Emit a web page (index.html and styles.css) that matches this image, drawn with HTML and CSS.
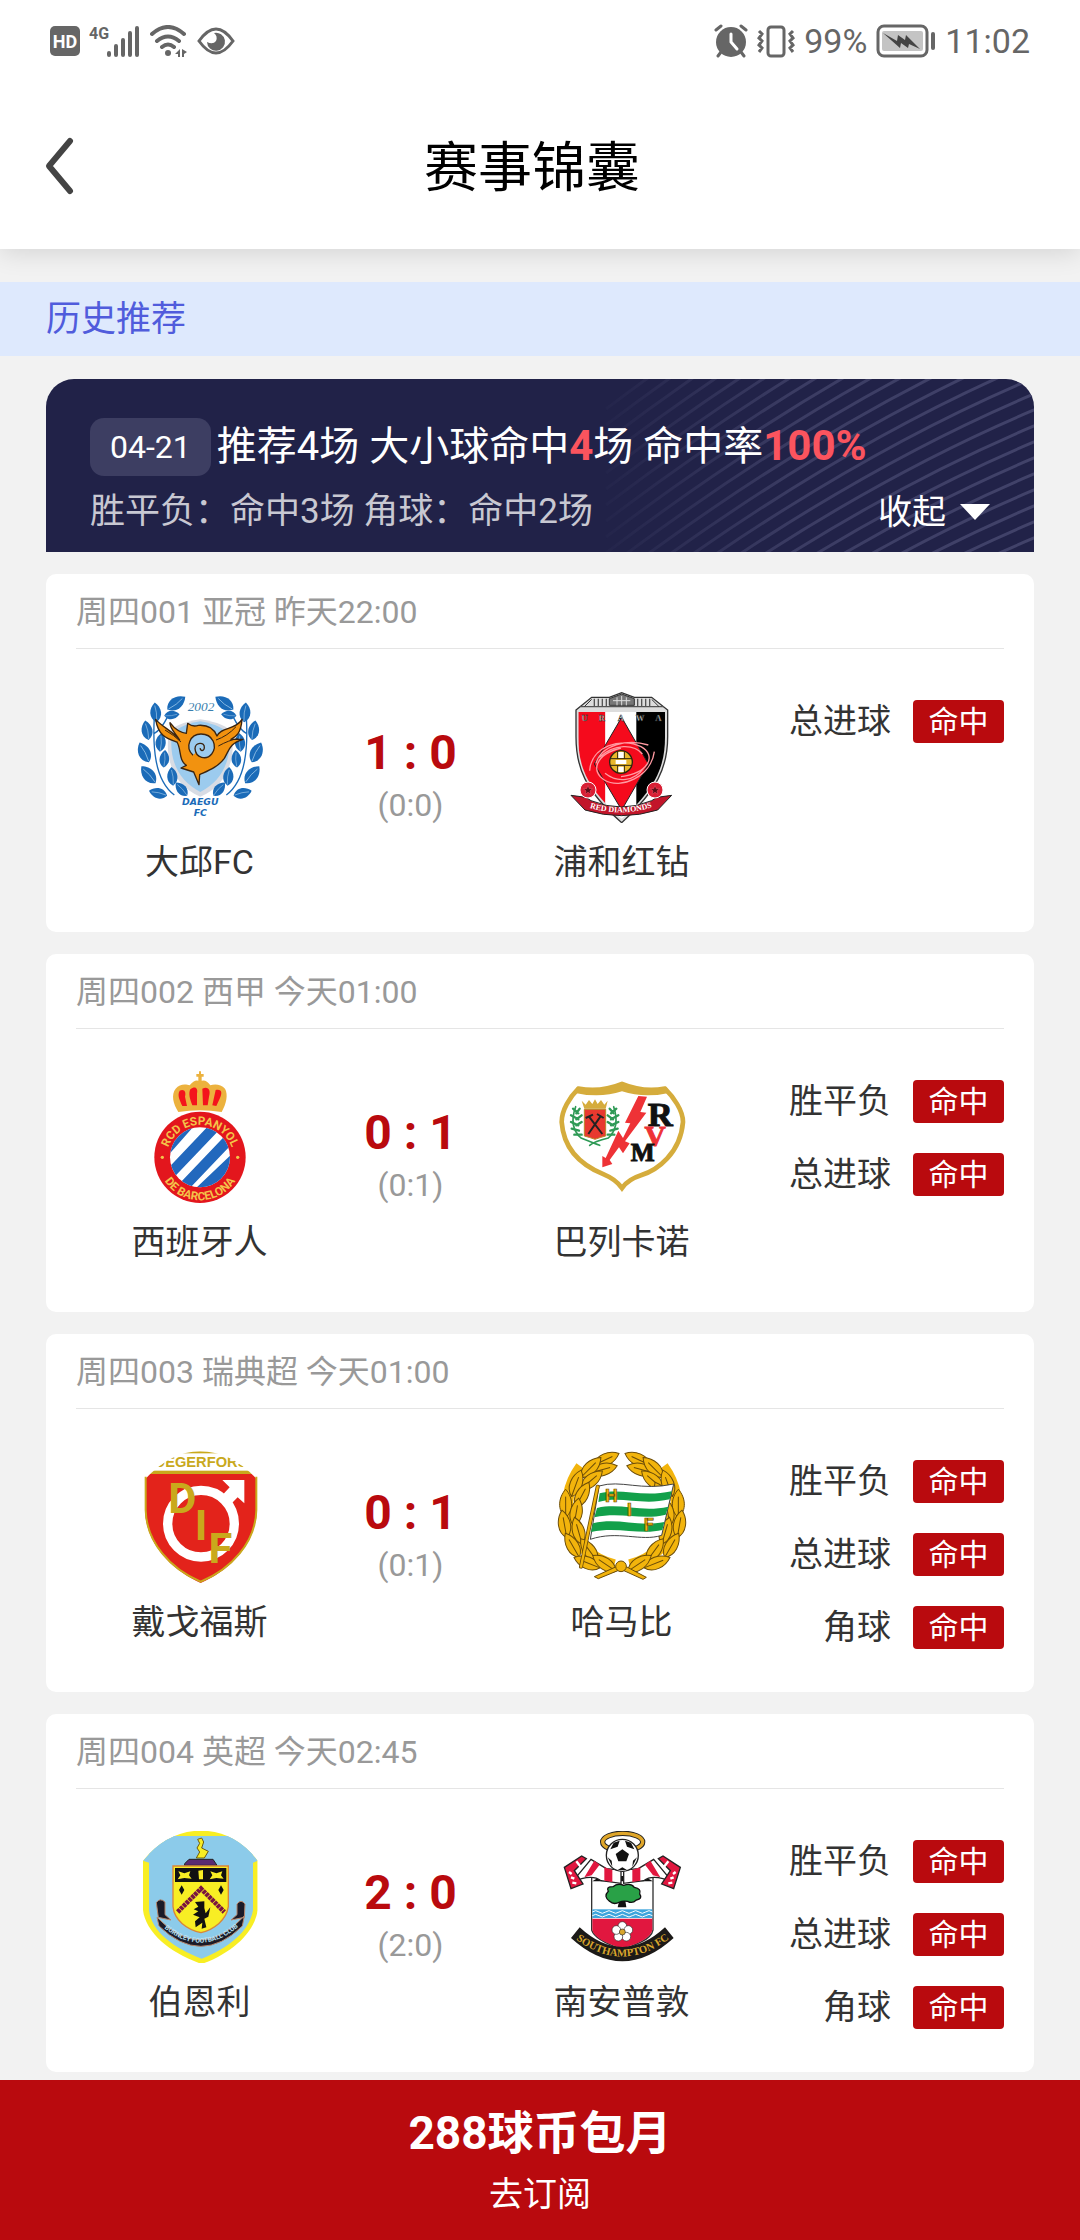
FILE: index.html
```html
<!DOCTYPE html>
<html lang="zh-CN">
<head>
    <meta charset="utf-8">
    <meta name="viewport" content="width=device-width, initial-scale=1">
    <title>赛事锦囊</title>
    <link rel="stylesheet" href="styles.css">
</head>
<body>
    <div class="top">
        <div class="status-bar">
            <div class="status-left">
                <svg width="30" height="32" viewBox="0 0 30 32">
                    <rect y="1" width="30" height="30" rx="5" fill="#666"/>
                    <text x="15" y="23" text-anchor="middle" font-size="18" font-weight="bold" fill="#fff">HD</text>
                </svg>
                <svg width="52" height="32" viewBox="0 0 52 32">
                    <text x="0" y="14" font-size="16" font-weight="bold" fill="#666">4G</text>
                    <path d="M20 28v2M27 21v9M34 15v15M41 8v22M48 3v27" stroke="#666" stroke-width="4" stroke-linecap="round"/>
                </svg>
                <svg width="38" height="32" viewBox="0 0 38 32" fill="none" stroke="#666" stroke-width="4" stroke-linecap="round">
                    <path d="M2 9Q18-5 34 9M7 16Q18 7 29 16M12 22Q18 17 24 22"/>
                    <circle cx="18" cy="28" r="3" fill="#666" stroke="none"/>
                    <path d="M30 24v8h-2v-3h-3zM32 24v8h2v-3l3-2z" fill="#666" stroke="none"/>
                </svg>
                <svg width="38" height="32" viewBox="0 0 38 32">
                    <path d="M2 16Q19-8 36 16Q19 40 2 16Z" fill="none" stroke="#666" stroke-width="3"/>
                    <path d="M17 8A9 9 0 1 1 10 17Q16 20 19 16Q21 11 17 8Z" fill="#666"/>
                </svg>
            </div>
            <div class="status-right">
                <svg width="34" height="34" viewBox="0 0 34 34">
                    <path d="M2 6l5-4M32 6l-5-4M7 28l-3 4M27 28l3 4" stroke="#666" stroke-width="3" stroke-linecap="round"/>
                    <circle cx="17" cy="18" r="15" fill="#666"/>
                    <path d="M17 10v8l6 7" fill="none" stroke="#fff" stroke-width="3" stroke-linecap="round"/>
                </svg>
                <svg width="38" height="34" viewBox="0 0 38 34" fill="none" stroke="#666" stroke-width="3">
                    <rect x="11" y="3" width="16" height="29" rx="3"/>
                    <path d="M2 7l3 3-3 4 3 3-3 4 3 3-3 4M36 7l-3 3 3 4-3 3 3 4-3 3 3 4"/>
                </svg>
                <span>99%</span>
                <svg width="60" height="34" viewBox="0 0 60 34">
                    <rect x="2" y="2" width="49" height="30" rx="6" fill="#fff" stroke="#666" stroke-width="3"/>
                    <rect x="6" y="7" width="41" height="20" rx="2" fill="#c4c4c4"/>
                    <path d="M7 9l14 8 1-6 7 5 1-5 14 14-11-5-1 4-7-5-1 5z" fill="#444"/>
                    <path d="M57 10v14" stroke="#666" stroke-width="4" stroke-linecap="round"/>
                </svg>
                <span>11:02</span>
            </div>
        </div>
        <header class="nav">
            <button class="back" type="button" aria-label="返回">
                <svg width="32" height="60" viewBox="0 0 32 60">
                    <path d="M26 5L5 30L26 55" fill="none" stroke="#444" stroke-width="6" stroke-linecap="round" stroke-linejoin="round"/>
                </svg>
            </button>
            <h1>赛事锦囊</h1>
        </header>
    </div>

    <main>
        <h2 class="section-title">历史推荐</h2>

        <section class="summary">
            <svg class="summary-lines" viewBox="0 0 988 173" preserveAspectRatio="xMaxYMid slice">
                <defs>
                    <linearGradient id="fade" x1="0" x2="1">
                        <stop offset="0.54" stop-color="#fff" stop-opacity="0"/>
                        <stop offset="0.76" stop-color="#fff" stop-opacity="0.8"/>
                        <stop offset="1" stop-color="#fff"/>
                    </linearGradient>
                    <mask id="fadeMask"><rect width="988" height="173" fill="url(#fade)"/></mask>
                    <path id="line" d="M1000 0Q790 86 560 260"/>
                    <g id="lines">
                        <use href="#line"/>
                        <use href="#line" y="16"/>
                        <use href="#line" y="32"/>
                        <use href="#line" y="48"/>
                        <use href="#line" y="64"/>
                    </g>
                </defs>
                <g mask="url(#fadeMask)" fill="none" stroke="#42436a" stroke-width="3">
                    <use href="#lines" y="-230"/>
                    <use href="#lines" y="-150"/>
                    <use href="#lines" y="-70"/>
                    <use href="#lines" y="10"/>
                    <use href="#lines" y="90"/>
                </g>
            </svg>
            <div class="summary-main">
                <span class="date">04-21</span>
                <span>推荐4场 大小球命中<b>4</b>场 命中率<b>100%</b></span>
            </div>
            <div class="summary-sub">
                <span>胜平负：命中3场 角球：命中2场</span>
                <button class="toggle" type="button">收起
                    <svg width="30" height="18" viewBox="0 0 30 18"><path d="M0 1H30L15 17Z" fill="#fff"/></svg>
                </button>
            </div>
        </section>

        <article class="match">
            <h3>周四001 亚冠 昨天22:00</h3>
            <div class="match-body">
                <div class="team">
                    <svg class="crest" viewBox="39 33 396 396">
                        <defs>
                            <g id="leaf">
                                <path d="M0 32C-26 16-22-16 0-34C22-16 26 16 0 32Z" fill="#1b6bb8"/>
                                <path d="M1 28Q5 0-1-24" fill="none" stroke="#a9d0ee" stroke-width="2"/>
                            </g>
                            <g id="branch">
                                <path d="M160 345C100 300 95 200 100 110M100 160Q120 150 140 110" fill="none" stroke="#1b6bb8" stroke-width="4"/>
                                <use href="#leaf" transform="translate(165 70) rotate(55)"/>
                                <use href="#leaf" transform="translate(152 105) rotate(85) scale(.7)"/>
                                <use href="#leaf" transform="translate(104 98) rotate(-5) scale(.9)"/>
                                <use href="#leaf" transform="translate(78 152) rotate(-10) scale(.9)"/>
                                <use href="#leaf" transform="translate(119 188) rotate(5) scale(.85)"/>
                                <use href="#leaf" transform="translate(70 218) rotate(-25)"/>
                                <use href="#leaf" transform="translate(130 237) rotate(5) scale(.8)"/>
                                <use href="#leaf" transform="translate(83 285) rotate(-40)"/>
                                <use href="#leaf" transform="translate(154 290) rotate(-5) scale(.85)"/>
                                <use href="#leaf" transform="translate(112 340) rotate(-75) scale(.85)"/>
                                <use href="#leaf" transform="translate(182 328) rotate(-40) scale(.8)"/>
                            </g>
                        </defs>
                        <path d="M143 160Q160 130 238 118Q316 130 333 160C345 250 310 320 238 350C166 320 130 250 143 160Z" fill="#d8dce4"/>
                        <path d="M152 166Q170 136 238 124Q306 136 324 166C332 246 300 304 238 336C176 304 144 246 152 166Z" fill="#9ccbee"/>
                        <use href="#branch"/>
                        <use href="#branch" transform="translate(476 0) scale(-1 1)"/>
                        <path d="M104 118C125 142 150 150 176 180C160 155 146 145 147 128C162 150 185 160 196 160L200 130Q215 142 232 136C262 134 280 148 288 168C300 140 345 150 363 118C360 160 345 170 330 178H366C325 190 325 210 310 235C290 262 262 272 236 284L234 314L218 276L180 264L196 256C172 240 182 210 168 186C140 176 112 170 104 118Z" fill="#f2920f" stroke="#3a2410" stroke-width="4" stroke-linejoin="round"/>
                        <path d="M216 226C190 200 208 162 240 162C276 162 290 198 272 222C256 242 224 234 222 206C222 186 252 184 250 204C248 216 236 212 238 204" fill="#9ccbee" stroke="#3a2410" stroke-width="4"/>
                        <path d="M285 180Q320 168 345 140M292 198Q325 180 350 176M132 150Q160 166 180 186" fill="none" stroke="#3a2410" stroke-width="3"/>
                        <text x="240" y="92" text-anchor="middle" class="serif" font-size="40" font-style="italic" fill="#3a7fae">2002</text>
                        <g text-anchor="middle" font-size="28" font-style="italic" font-weight="bold" class="wide" fill="#1b6bb8">
                            <text x="238" y="375">DAEGU</text>
                            <text x="238" y="408">FC</text>
                        </g>
                    </svg>
                    <span>大邱FC</span>
                </div>
                <div class="score">
                    <strong>1 : 0</strong>
                    <span>(0:0)</span>
                </div>
                <div class="team">
                    <svg class="crest" viewBox="45 33 396 396">
                        <defs>
                            <clipPath id="urawaClip"><path d="M112 96H372V170C372 250 352 320 242 416C130 320 112 250 112 170Z"/></clipPath>
                            <path id="urawaText" d="M146 384Q242 412 340 380"/>
                            <g id="rose">
                                <circle r="24" fill="#d81e34" stroke="#fff" stroke-width="3"/>
                                <path d="M0-14L4-4L14-4L6 3L9 13L0 7L-9 13L-6 3L-14-4L-4-4Z" fill="#5c0d18" stroke="#e8485a" stroke-width="2"/>
                            </g>
                        </defs>
                        <path d="M105 90L152 52H205L242 38L280 52H332L380 90V170C380 260 350 330 242 428C130 330 105 260 105 170Z" fill="#ddd" stroke="#333" stroke-width="4"/>
                        <path d="M118 80H368M160 56V80M172 56V80M184 56V80M196 56V80M290 56V80M302 56V80M314 56V80M326 56V80" stroke="#555" stroke-width="4"/>
                        <path d="M205 76V56L242 42L280 56V76ZM130 80L152 58M354 80L332 58" fill="#777" stroke="#333" stroke-width="3"/>
                        <path d="M216 62H268M228 52V76M242 48V76M256 52V76" stroke="#ddd" stroke-width="3"/>
                        <g clip-path="url(#urawaClip)">
                            <rect x="105" y="90" width="88" height="330" fill="#f50a1c"/>
                            <rect x="193" y="90" width="93" height="330" fill="#fff"/>
                            <rect x="286" y="90" width="95" height="330" fill="#000"/>
                        </g>
                        <path d="M242 112L322 252L242 390L160 252Z" fill="#f50a1c" stroke="#222" stroke-width="3"/>
                        <g fill="none" stroke="#ff9aa2" stroke-width="4">
                            <path d="M146 272C150 200 240 170 300 200C350 228 320 280 240 290M340 215C330 290 240 330 190 300C150 276 160 224 240 204M165 250C180 195 260 175 322 195M175 232C220 190 280 192 304 222M310 262C280 305 230 310 192 280"/>
                        </g>
                        <circle cx="240" cy="246" r="34" fill="#e9b72a" stroke="#2d2410" stroke-width="4"/>
                        <path d="M208 236H272M208 256H272M230 214V236M250 214V236M230 256V278M250 256V278" stroke="#2d2410" stroke-width="3"/>
                        <path d="M232 216H248V234H232ZM224 240H256V252H224ZM232 260H248V276H232Z" fill="#fff"/>
                        <path d="M90 346L135 352L150 362Q242 400 332 362L348 352L392 346L350 390Q242 424 132 390Z" fill="#c2152a" stroke="#222" stroke-width="3"/>
                        <use href="#rose" x="141" y="330"/>
                        <use href="#rose" x="342" y="330"/>
                        <g class="serif" font-size="26" font-weight="bold" fill="#ccc" stroke="#222" stroke-width="1" text-anchor="middle">
                            <text x="131" y="124">U</text><text x="183" y="124">R</text><text x="240" y="124">A</text><text x="297" y="124">W</text><text x="352" y="124">A</text>
                        </g>
                        <text class="serif" font-size="24" font-weight="bold" fill="#fff"><textPath href="#urawaText">RED DIAMONDS</textPath></text>
                    </svg>
                    <span>浦和红钻</span>
                </div>
                <ul class="hits">
                    <li>总进球 <em>命中</em></li>
                </ul>
            </div>
        </article>

        <article class="match">
            <h3>周四002 西甲 今天01:00</h3>
            <div class="match-body">
                <div class="team">
                    <svg class="crest" viewBox="39 33 396 396">
                        <defs>
                            <clipPath id="espClip"><circle cx="237" cy="292" r="90"/></clipPath>
                            <path id="espTop" d="M137 310A101 101 0 1 1 337 310"/>
                            <path id="espBottom" d="M112 296A125 125 0 0 0 362 296"/>
                        </defs>
                        <path d="M172 156C156 130 150 104 164 86C176 70 196 72 206 76Q220 58 232 62V50H226V42H234V34H240V42H248V50H242V62Q256 58 268 76C280 72 300 72 312 86C322 104 316 130 302 156Q237 146 172 156Z" fill="#ecb23e"/>
                        <path d="M176 92C190 86 196 96 192 110L198 138L184 138C176 120 168 106 176 92ZM208 88C222 76 232 84 228 100V136L214 136C206 116 202 100 208 88ZM244 86C262 78 270 90 264 110L260 136H246ZM284 90C304 86 304 100 296 116L286 138L274 136Z" fill="#f4141c"/>
                        <circle cx="237" cy="292" r="137" fill="#e3161d"/>
                        <circle cx="237" cy="292" r="90" fill="#fff"/>
                        <g clip-path="url(#espClip)" stroke="#2268bd" stroke-width="32">
                            <path d="M80 332L240 150M120 370L320 160M160 410L360 200M200 430L400 240"/>
                        </g>
                        <g font-size="35" font-weight="bold" fill="#f3c44a">
                            <text><textPath href="#espTop" startOffset="50%" text-anchor="middle">RCD ESPANYOL</textPath></text>
                            <text><textPath href="#espBottom" startOffset="50%" text-anchor="middle">DE BARCELONA</textPath></text>
                        </g>
                        <circle cx="124" cy="292" r="5" fill="#f3c44a"/>
                        <circle cx="350" cy="292" r="5" fill="#f3c44a"/>
                    </svg>
                    <span>西班牙人</span>
                </div>
                <div class="score">
                    <strong>0 : 1</strong>
                    <span>(0:1)</span>
                </div>
                <div class="team">
                    <svg class="crest" viewBox="45 33 396 396">
                        <path d="M112 86Q180 98 243 72Q306 98 372 86C396 110 426 150 426 186C418 280 350 330 300 346Q262 358 243 384Q224 358 190 344C120 316 68 270 62 186C62 150 86 112 112 86Z" fill="#fff" stroke="#d5ac3c" stroke-width="14"/>
                        <path d="M108 82Q180 98 243 66Q306 98 376 82L388 98Q310 116 243 94Q176 116 98 98Z" fill="#d5ac3c"/>
                        <g fill="none" stroke="#2f9a56" stroke-linecap="round">
                            <path d="M104 140Q82 200 120 234Q160 250 176 256M218 140Q238 200 202 234Q160 244 146 256" stroke-width="5"/>
                            <path d="M96 146L112 160M90 166L112 178M90 186L112 196M92 206L114 212M100 224L122 224M116 146L106 160M122 166L106 178M122 186L106 196M226 146L210 160M232 166L210 178M232 186L210 196M230 206L208 212M220 224L200 224M206 146L218 160M200 166L216 178M200 186L216 196" stroke-width="7"/>
                        </g>
                        <path d="M122 122L134 134L144 120L154 132L162 118L170 132L180 120L190 134L200 122L194 146H130Z" fill="#d5ac3c"/>
                        <path d="M130 148H194V228Q178 232 162 238Q146 232 130 228Z" fill="#e8392f" stroke="#b98a2a" stroke-width="3"/>
                        <path d="M134 174L156 164M144 170L184 222M168 162L188 174M178 170L142 222" stroke="#222" stroke-width="6"/>
                        <path d="M292 108L318 110L298 156L316 158L252 244L266 250L246 280L234 262L206 300L214 312L184 322V288L194 294L232 212L246 234L268 190L252 188Z" fill="#ee3236"/>
                        <g class="serif" font-weight="bold" text-anchor="middle" stroke-width="3">
                            <text x="358" y="198" font-size="104" fill="#111" stroke="#111">R</text>
                            <text x="342" y="258" font-size="88" fill="#ee3236" stroke="#ee3236">V</text>
                            <text x="305" y="304" font-size="76" fill="#111" stroke="#111">M</text>
                        </g>
                    </svg>
                    <span>巴列卡诺</span>
                </div>
                <ul class="hits">
                    <li>胜平负 <em>命中</em></li>
                    <li>总进球 <em>命中</em></li>
                </ul>
            </div>
        </article>

        <article class="match">
            <h3>周四003 瑞典超 今天01:00</h3>
            <div class="match-body">
                <div class="team">
                    <svg class="crest" viewBox="39 63 396 396">
                        <defs>
                            <clipPath id="degClip"><path d="M72 148Q150 64 237 64Q330 64 408 148V240C404 340 330 420 239 459C150 420 74 340 72 240Z"/></clipPath>
                        </defs>
                        <g clip-path="url(#degClip)">
                            <rect x="60" y="60" width="360" height="400" fill="#fff"/>
                            <rect x="60" y="60" width="360" height="10" fill="#c9a91c"/>
                            <text x="240" y="112" text-anchor="middle" class="sans" font-size="44" font-weight="bold" fill="#c9a91c">DEGERFORS</text>
                            <rect x="60" y="122" width="360" height="10" fill="#c9a91c"/>
                            <path d="M60 132H420V460H60Z" fill="#e3231b"/>
                        </g>
                        <path d="M74 140V240C76 338 150 418 239 455C330 418 404 338 406 240V140" fill="none" stroke="#c9a91c" stroke-width="6"/>
                        <circle cx="240" cy="281" r="100" fill="none" stroke="#fff" stroke-width="28"/>
                        <path d="M304 150H370V220L350 202L322 230L296 204L326 172Z" fill="#fff"/>
                        <g font-weight="bold" text-anchor="middle" fill="#c9a91c">
                            <text x="184" y="248" font-size="130">D</text>
                            <text x="240" y="330" font-size="130">I</text>
                            <text x="298" y="398" font-size="130">F</text>
                        </g>
                    </svg>
                    <span>戴戈福斯</span>
                </div>
                <div class="score">
                    <strong>0 : 1</strong>
                    <span>(0:1)</span>
                </div>
                <div class="team">
                    <svg class="crest" viewBox="1305 63 396 396">
                        <defs>
                            <path id="gold" d="M0 42C-26 22-22-18 0-42C22-18 26 22 0 42ZM0 42V-20" fill="#f2b40c" stroke="#6b4c08" stroke-width="3"/>
                            <g id="wreath">
                                <path d="M1480 405C1340 370 1300 220 1380 110" fill="none" stroke="#f2b40c" stroke-width="34"/>
                                <use href="#gold" transform="translate(1456 88) rotate(65)"/>
                                <use href="#gold" transform="translate(1448 118) rotate(75)"/>
                                <use href="#gold" transform="translate(1410 112) rotate(45)"/>
                                <use href="#gold" transform="translate(1412 150) rotate(50)"/>
                                <use href="#gold" transform="translate(1366 160) rotate(20)"/>
                                <use href="#gold" transform="translate(1384 194) rotate(28)"/>
                                <use href="#gold" transform="translate(1334 220)"/>
                                <use href="#gold" transform="translate(1366 246) rotate(10)"/>
                                <use href="#gold" transform="translate(1330 282) rotate(-10)"/>
                                <use href="#gold" transform="translate(1372 302) rotate(-16)"/>
                                <use href="#gold" transform="translate(1354 346) rotate(-30)"/>
                                <use href="#gold" transform="translate(1404 360) rotate(-36)"/>
                                <use href="#gold" transform="translate(1398 398) rotate(-68)"/>
                                <use href="#gold" transform="translate(1450 400) rotate(-56)"/>
                            </g>
                        </defs>
                        <use href="#wreath"/>
                        <use href="#wreath" transform="translate(3006 0) scale(-1 1)"/>
                        <path d="M1490 408L1420 440L1432 446L1500 418L1566 448L1576 442L1512 408Z" fill="#f2b40c" stroke="#6b4c08" stroke-width="3"/>
                        <circle cx="1500" cy="409" r="16" fill="#f2b40c" stroke="#6b4c08" stroke-width="3"/>
                        <path d="M1434 168C1500 148 1560 184 1658 162L1622 316C1560 336 1490 300 1408 328Z" fill="#fff" stroke="#444" stroke-width="3"/>
                        <path d="M1436 190C1500 172 1560 204 1652 184L1646 208C1560 228 1500 196 1432 216ZM1428 234C1500 218 1560 248 1642 230L1634 254C1560 272 1500 244 1420 262ZM1416 280C1490 262 1550 292 1630 276L1624 300C1556 316 1490 288 1410 306Z" fill="#12a04a"/>
                        <path d="M1430 170L1380 410" stroke="#6b4c08" stroke-width="12" stroke-linecap="round"/>
                        <path d="M1430 170L1380 410" stroke="#f2b40c" stroke-width="7" stroke-linecap="round"/>
                        <g font-weight="bold" font-size="54" fill="#f2b40c" stroke="#6b4c08" stroke-width="2" text-anchor="middle">
                            <text x="1471" y="217">H</text><text x="1525" y="258">I</text><text x="1583" y="304">F</text>
                        </g>
                    </svg>
                    <span>哈马比</span>
                </div>
                <ul class="hits">
                    <li>胜平负 <em>命中</em></li>
                    <li>总进球 <em>命中</em></li>
                    <li>角球 <em>命中</em></li>
                </ul>
            </div>
        </article>

        <article class="match">
            <h3>周四004 英超 今天02:45</h3>
            <div class="match-body">
                <div class="team">
                    <svg class="crest" viewBox="39 33 396 396">
                        <defs>
                            <clipPath id="burClip"><path d="M66 122Q140 32 240 32Q340 32 410 122V270C400 340 330 400 242 432C150 400 74 340 66 270Z"/></clipPath>
                            <path id="burText" d="M118 314Q240 424 364 310"/>
                        </defs>
                        <g clip-path="url(#burClip)">
                            <rect x="60" y="30" width="360" height="410" fill="#f8ee24"/>
                            <path d="M84 48H396V270C386 334 320 386 242 416C160 386 90 334 84 270Z" fill="#8ccbea"/>
                            <path d="M66 122Q110 66 160 48H320Q376 68 410 122L396 128H84Z" fill="#8ccbea"/>
                        </g>
                        <path d="M192 130L204 118H276L288 136H190Z" fill="#5a2a72" stroke="#222" stroke-width="3"/>
                        <path d="M230 58L242 54L248 66L242 84L262 94L250 114H226L236 96L228 84L236 70Z" fill="#f8ee24" stroke="#6b5a10" stroke-width="3"/>
                        <path d="M156 138H322V260C316 300 280 328 240 338C196 328 160 300 156 260Z" fill="#f8ee24" stroke="#d8873a" stroke-width="4"/>
                        <path d="M162 144H316V186H162Z" fill="#111"/>
                        <path d="M172 154L190 160L208 154L204 166L212 176L190 174L170 178L178 166ZM232 152L246 150V178H234ZM268 154L286 160L304 154L300 166L308 176L286 174L266 178L274 166Z" fill="#f8ee24"/>
                        <path d="M170 276L240 206L310 276" fill="none" stroke="#7a1440" stroke-width="14" stroke-dasharray="10 2"/>
                        <path d="M182 196L190 210L182 224L174 210ZM300 196L308 210L300 224L292 210Z" fill="#111"/>
                        <path d="M222 246L250 244V264L254 280L268 262L262 290L250 296L256 322L242 326L244 308L224 322L222 304L236 292L216 284L232 274L218 268L232 260Z" fill="#111"/>
                        <path d="M108 292Q240 430 370 288L364 318Q240 440 114 318ZM106 248Q116 232 132 246V284L150 300L112 292ZM372 252Q360 236 348 252V284L330 300L370 292Z" fill="#1b1b28" stroke="#b5856a" stroke-width="3"/>
                        <text font-size="20" font-weight="bold" fill="#b9e2f5"><textPath href="#burText" startOffset="50%" text-anchor="middle">BURNLEY FOOTBALL CLUB</textPath></text>
                    </svg>
                    <span>伯恩利</span>
                </div>
                <div class="score">
                    <strong>2 : 0</strong>
                    <span>(2:0)</span>
                </div>
                <div class="team">
                    <svg class="crest" viewBox="1305 33 396 396">
                        <defs>
                            <path id="souText" d="M1362 356Q1504 464 1648 354"/>
                            <g id="scarf">
                                <path d="M1456 146L1410 118L1352 188Q1410 160 1440 182L1500 190V150Z" fill="#fff" stroke="#222" stroke-width="4"/>
                                <path d="M1420 122L1436 134L1412 166L1390 172ZM1450 142L1474 150V186L1450 182Z" fill="#e1173f"/>
                                <path d="M1330 142L1382 108L1396 116L1360 152L1386 192L1350 206Z" fill="#e1173f" stroke="#222" stroke-width="4"/>
                                <path d="M1344 156L1352 162M1350 172L1360 176M1354 188L1366 190M1366 124L1380 142" stroke="#fff" stroke-width="7"/>
                            </g>
                        </defs>
                        <path d="M1412 172H1596V330C1590 360 1540 376 1504 388C1468 376 1420 356 1412 330Z" fill="#fff" stroke="#333" stroke-width="4"/>
                        <path d="M1414 296H1594V330C1588 358 1540 374 1504 386C1468 374 1420 356 1414 330Z" fill="#e1173f"/>
                        <rect x="1414" y="268" width="180" height="26" fill="#3ea5dc"/>
                        <path d="M1414 276q10-8 20 0t20 0t20 0t20 0t20 0t20 0t20 0t20 0t20 0M1414 287q10-8 20 0t20 0t20 0t20 0t20 0t20 0t20 0t20 0t20 0" fill="none" stroke="#fff" stroke-width="3"/>
                        <path d="M1496 236H1512L1516 262H1490Z" fill="#111"/>
                        <path d="M1462 214Q1454 200 1476 200Q1490 188 1508 196Q1530 188 1540 202Q1562 206 1556 222Q1566 236 1546 240Q1534 252 1520 244Q1504 242 1496 246Q1478 256 1466 244Q1446 230 1462 214Z" fill="#29a147" stroke="#111" stroke-width="4"/>
                        <g fill="#fff" stroke="#333" stroke-width="2">
                            <circle cx="1504" cy="318" r="13"/><circle cx="1522" cy="330" r="13"/><circle cx="1516" cy="350" r="13"/><circle cx="1492" cy="350" r="13"/><circle cx="1486" cy="330" r="13"/>
                            <circle cx="1504" cy="336" r="9" fill="#d9a62c"/>
                        </g>
                        <path d="M1414 184L1440 168H1568L1596 184Z" fill="#111"/>
                        <use href="#scarf"/>
                        <use href="#scarf" transform="translate(3008 0) scale(-1 1)"/>
                        <ellipse cx="1505" cy="66" rx="60" ry="26" fill="none" stroke="#222" stroke-width="16"/>
                        <ellipse cx="1505" cy="66" rx="60" ry="26" fill="none" stroke="#dfa62a" stroke-width="10"/>
                        <circle cx="1504" cy="106" r="48" fill="#fff" stroke="#222" stroke-width="4"/>
                        <path d="M1504 88L1524 102L1516 124H1492L1484 102ZM1478 68L1496 62L1490 80L1468 88ZM1530 68L1512 62L1518 80L1540 88ZM1460 112L1472 122L1474 140ZM1548 112L1536 122L1534 140ZM1490 150L1504 142L1518 150Z" fill="#111"/>
                        <path d="M1376 322Q1504 440 1632 322L1658 354Q1504 494 1350 354Z" fill="#1c1a18"/>
                        <text class="serif" font-size="32" font-weight="bold" fill="#d9a62c"><textPath href="#souText" startOffset="50%" text-anchor="middle">SOUTHAMPTON FC</textPath></text>
                    </svg>
                    <span>南安普敦</span>
                </div>
                <ul class="hits">
                    <li>胜平负 <em>命中</em></li>
                    <li>总进球 <em>命中</em></li>
                    <li>角球 <em>命中</em></li>
                </ul>
            </div>
        </article>
    </main>

    <button class="subscribe" type="button">
        <strong>288球币包月</strong>
        <span>去订阅</span>
    </button>
</body>
</html>
```

FILE: styles.css
```css
* {
    box-sizing: border-box;
}

body {
    margin: 0;
    background-color: #f2f2f2;
    color: #333;
    font-family: Roboto, "Noto Sans CJK SC", sans-serif;
    font-size: 34px;
}

h1, h2, h3, ul {
    margin: 0;
    padding: 0;
    font-weight: normal;
}

button {
    border: none;
    background: none;
    padding: 0;
    color: inherit;
    font: inherit;
    cursor: pointer;
}

svg {
    display: block;
    flex: none;
}

.serif {
    font-family: "Liberation Serif", serif;
}

.sans {
    font-family: "Liberation Sans", sans-serif;
}

.wide {
    font-family: "DejaVu Sans", sans-serif;
}

/* top */
.top {
    background-color: #fff;
    box-shadow: 0 4px 24px rgba(0, 0, 0, 0.12);
}

.status-bar {
    display: flex;
    justify-content: space-between;
    align-items: center;
    height: 82px;
    padding: 0 50px;
    color: #666;
}

.status-left,
.status-right {
    display: flex;
    align-items: center;
    gap: 9px;
}

.nav {
    display: grid;
    grid-template-columns: 32px 1fr 48px;
    align-items: center;
    height: 167px;
    padding: 0 44px;
}

.nav h1 {
    padding-top: 6px;
    color: #000;
    font-size: 54px;
    line-height: 80px;
    text-align: center;
}

/* content */
main {
    padding: 33px 0 8px;
}

.section-title {
    padding: 1px 46px 0;
    background-color: #dee9fd;
    color: #505cdc;
    font-size: 35px;
    line-height: 73px;
}

.summary {
    position: relative;
    height: 173px;
    margin: 23px 46px 22px;
    padding: 38px 44px 0;
    border-radius: 28px 28px 0 0;
    background-color: #212248;
    color: #fff;
    overflow: hidden;
}

.summary-lines {
    position: absolute;
    top: 0;
    left: 0;
    width: 100%;
    height: 100%;
}

.summary-main,
.summary-sub {
    position: relative;
    display: flex;
    align-items: center;
}

.summary-main {
    gap: 6px;
    font-size: 40px;
    line-height: 58px;
}

.summary-main b {
    color: #fb545e;
    font-size: 42px;
}

.date {
    padding: 0 20px;
    border-radius: 14px;
    background-color: #3d3e62;
    font-size: 32px;
}

.summary-sub {
    justify-content: space-between;
    margin-top: 12px;
    color: #c8c8d2;
    font-size: 35px;
    line-height: 48px;
}

.toggle {
    display: flex;
    align-items: center;
    gap: 14px;
    color: #fff;
    font-size: 34px;
}

/* match card */
.match {
    margin: 0 46px 22px;
    padding: 0 30px 47px;
    border-radius: 10px;
    background-color: #fff;
}

.match:last-child {
    margin-bottom: 0;
}

.match h3 {
    padding-top: 2px;
    border-bottom: 1px solid #e5e5e5;
    color: #999;
    font-size: 32px;
    line-height: 72px;
}

.match-body {
    display: grid;
    grid-template-columns: 1fr 1fr 1fr 277px;
    padding: 42px 0 0 18px;
}

.team {
    display: flex;
    flex-direction: column;
    align-items: center;
    gap: 16px;
    height: 194px;
    line-height: 46px;
}

.crest {
    width: 132px;
    height: 132px;
}

.score {
    display: flex;
    flex-direction: column;
    align-items: center;
    padding-top: 34px;
}

.score strong {
    color: #b90a0e;
    font-size: 48px;
    line-height: 56px;
}

.score span {
    color: #999;
    font-size: 32px;
    line-height: 48px;
}

.hits {
    display: flex;
    flex-direction: column;
    gap: 30px;
    height: 194px;
    padding-top: 9px;
    list-style: none;
}

.hits li {
    display: flex;
    justify-content: flex-end;
    gap: 22px;
    line-height: 43px;
}

.hits em {
    width: 91px;
    border-radius: 4px;
    background-color: #b90a0e;
    color: #fff;
    font-size: 30px;
    font-style: normal;
    text-align: center;
}

/* bottom bar */
.subscribe {
    position: sticky;
    bottom: 0;
    display: flex;
    flex-direction: column;
    align-items: center;
    width: 100%;
    height: 160px;
    padding-top: 22px;
    background-color: #b90a0e;
    color: #fff;
}

.subscribe strong {
    font-size: 46px;
    line-height: 62px;
}

.subscribe span {
    line-height: 60px;
}
```
